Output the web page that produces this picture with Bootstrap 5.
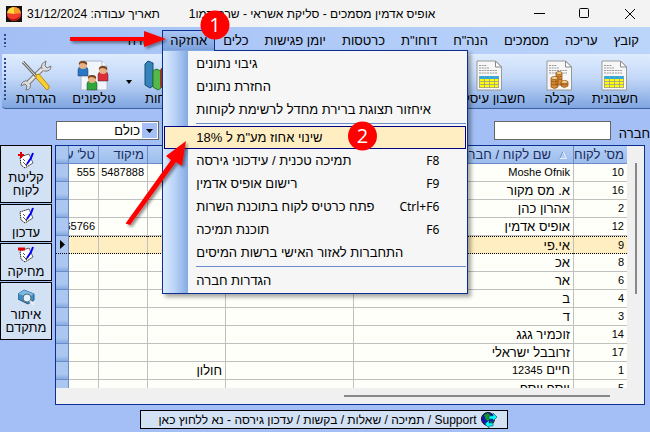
<!DOCTYPE html>
<html lang="he" dir="rtl">
<head>
<meta charset="utf-8">
<meta name="viewport" content="width=device-width, initial-scale=1">
<title>אופיס אדמין</title>
<link href="https://cdn.jsdelivr.net/npm/bootstrap@5.3.0/dist/css/bootstrap.min.css" rel="stylesheet">
<style>
body{font:13px/16px "Liberation Sans",sans-serif;color:#000;background:#a3bff5}
button{color:inherit;font:inherit}
.app{height:100vh}
.titlebar{height:27px;background:#f3f3f3;padding:0 14px 0 6px}
.titlebar h1{font-size:12px;line-height:16px;gap:29px}
.app-logo{margin-right:5px}
.win-btns{gap:34px}
.win-btns svg,.titlebar svg{display:block}
.menubar{height:27px;background:linear-gradient(to right,#a3bff5,#bbd5fa);padding:3px 3px 3px 4px}
.menu-top{height:21px;padding:0 8px;border:0;background:none;white-space:nowrap}
.menu-top.opened{border:1px solid #0a2f91;border-bottom:0;padding:0 7px;background:linear-gradient(#a9c5f3,#7a9fdc)}
.popup{left:0;top:20px;width:306px;z-index:10;border:1px solid #0a2f91;background:linear-gradient(to right,#dcebfd,#b9d2f7 12px,#84aae4 25px,#f6f6f6 25px);padding:1px;box-shadow:3px 3px 4px rgba(0,0,0,.35)}
.popup::before{content:"";position:absolute;left:0;top:-1px;width:51px;height:1px;background:#84aae4}
.popup-row{height:23px;padding:0 26px 0 31px;border:1px solid transparent;background:none;white-space:nowrap;align-items:center}
.popup-row [lang=en]{font:12px/16px "Noto Sans",sans-serif}
.popup-row.hot{background:#ffeec2;border-color:#000080}
.popup-rule{height:1px;margin:2px 0 2px 32px;background:#6a8ccb}
.tools{height:55px;background:linear-gradient(#dfecfe,#c3d8f8 45%,#7fa5e0);border-bottom:1px solid #3b619c;border-radius:0 0 0 4px;margin-left:2px;padding:4px 12px 0 2px}
.tool{border:0;background:none;padding:0;white-space:nowrap}
.tool svg{display:block;margin:0 auto}
.tool-set{gap:17px}
.tool-wide{min-width:76px}
.tool-last{margin:0 16px 0 10px}
.drop{padding:22px 12px 0 10px}
.grips{width:2px;background:repeating-linear-gradient(#2a4a90 0 2px,transparent 2px 4px)}
.filters{height:36px;padding:12px 0 5px 0}
.box{height:19px;border:1px solid #666;border-radius:0;background-color:#fff;font-size:13px;line-height:16px}
.name-box{width:117px}
.name-label{margin-left:8px;padding-top:5px}
.type-box{width:103px;margin-left:56px;padding:0 18px 0 2px;appearance:none;background:#fff url("data:image/svg+xml,%3Csvg xmlns='http://www.w3.org/2000/svg' width='16' height='17'%3E%3Cpath fill='%23a3bff5' d='M0 1h15v15H0z'/%3E%3Cpath d='M4 7h7L7.500 11z'/%3E%3C/svg%3E") right 0 top 0 no-repeat}
.side{width:52px;gap:1px}
.side-btn{border:1px solid #000;background:#d3e1f5;padding:2px 0;line-height:13px}
.side-btn.tall{padding:6px 0 5px}
.side-btn svg{display:block;margin:0 auto 2px}
.grid-frame{border:1px solid #0a2f91;background:#f0f0f0;margin:0 5px 0 3px}
.grid-clip{min-height:0;overflow:hidden}
.data{table-layout:fixed;width:100%;line-height:16px;border-collapse:separate;border-spacing:0}
.data th,.data td{height:18px;padding:0 3px;overflow:hidden;white-space:nowrap;text-align:right;border-left:1px solid #c0c0c0;border-bottom:1px solid #c0c0c0;background:#fffff9}
.data th{font-weight:400;background:linear-gradient(#b5cff5,#9dbdec);border-color:#6a8ccb;color:#1a2c60}
.data .num,.data td:first-child{font-size:11px;line-height:17px}
.data .ind{background:linear-gradient(#abc7f0 70%,#86aae0);border-left:0;border-bottom-color:#6a8ccb;border-right:1px solid #6a8ccb;padding:0}
.data .cut{border-left:0}
.data .picked td{background:#ffeec2;border-top:1px dotted #000;border-bottom:1px dotted #000;line-height:15px}
.data .picked .ind{background:#abc7f0;border-top:0}
.w-id{width:54px}.w-a{width:128px}.w-b{width:78px}.w-zip{width:49px}.w-tel{width:29px}.w-ind{width:13px}
.sort{margin:0 3px 0 8px}
.vbar{width:17px;padding-top:17px}
.vbar i{display:block;width:2px;height:58%;margin:0 auto;background:#888}
.hbar{height:16px;padding:7px 34px 0 0}
.hbar i{display:block;height:2px;width:48%;background:#888}
.support{height:27px;padding:5px 0 3px}
.support button{height:19px;width:368px;margin-right:3px;border:1px solid #000;background:#d3e1f5;font-size:12px;line-height:16px;padding:0 9px 0 8px;white-space:nowrap;gap:4px}
.notes{left:0;top:0;z-index:20;pointer-events:none}
</style>
<script src="https://cdn.jsdelivr.net/npm/bootstrap@5.3.0/dist/js/bootstrap.bundle.min.js"></script>
</head>
<body>
<svg width="0" height="0" class="position-absolute" aria-hidden="true">
<defs>
<symbol id="page" viewBox="0 0 27 31"><path d="M1 1h18.500l6 6v23H1z" fill="#f7f7f7" stroke="#999"/><path d="M19.500 1v6h6z" fill="#fff" stroke="#888"/><path d="M3 5.500h8M3 8h10M3 10.500h18M3 13h18" stroke="#999" stroke-dasharray="2 .7"/></symbol>
<symbol id="sheet" viewBox="0 0 27 31"><use href="#page" width="27" height="31"/><path d="M3 16h20v12H3z" fill="#ff0"/><path d="M3 16h20v3H3z" fill="#29abe2"/><path d="M3 21.500h20M3 24.500h20M3 27.500h20M3.500 16v12M8.500 16v12M13.500 16v12M18.500 16v12M22.500 16v12" stroke="#999" stroke-width=".8" fill="none"/></symbol>
<symbol id="note" viewBox="0 0 17 17"><path d="M2 5l9-3 4 9-8 5-4-3z" fill="#fff" stroke="#222" stroke-dasharray="1.500 .7"/><path d="M5 7l2 2M5 10l3 3" stroke="#555"/><path d="M15 1l-2 5-4 6" stroke="#00f" stroke-width="2" fill="none"/><path d="M9 12l-1 2" stroke="#000"/></symbol>
<symbol id="man" viewBox="0 0 12 17"><path d="M1 16V10q0-3 3-3h4q3 0 3 3v6z" fill="currentColor" stroke="#334" stroke-width=".5"/><circle cx="6" cy="5" r="4" fill="#e7b184"/><path d="M2 5Q1 1 6 1t4 4Q8 3 5 3 3 3 2 5" fill="#7a4420"/></symbol>
</defs>
</svg>
<div class="app d-flex flex-column position-relative overflow-hidden">
<header class="titlebar d-flex align-items-center flex-shrink-0">
<div class="win-btns d-flex align-items-center">
<button class="btn p-0 border-0" aria-label="סגור"><svg width="12" height="12"><path d="M1 1l10 10M11 1L1 11" stroke="#000" fill="none"/></svg></button>
<button class="btn p-0 border-0" aria-label="הגדל"><svg width="11" height="11"><rect x=".5" y=".5" width="9" height="9" rx="1" stroke="#000" fill="none"/></svg></button>
<button class="btn p-0 border-0" aria-label="מזער"><svg width="11" height="11"><path d="M0 5.500h11" stroke="#000"/></svg></button>
</div>
<h1 class="m-0 flex-grow-1 d-flex justify-content-end fw-normal text-nowrap"><span>אופיס אדמין מסמכים - סליקת אשראי - שרת דמו1</span><span>תאריך עבודה: 31/12/2024</span></h1>
<svg class="app-logo" width="16" height="16"><rect width="16" height="16" fill="#111"/><circle cx="8" cy="8" r="7" fill="#f33d2c"/><path d="M8 8L1 7Q2 1 8 1z" fill="#ffd83c"/><path d="M8 8V1q6 0 7 6z" fill="#f99a28"/><path d="M2 11q6 5 12-1-2 5-6 5t-6-4" fill="#b41313"/></svg>
</header>

<nav class="menubar d-flex flex-shrink-0">
<button class="menu-top">קובץ</button><button class="menu-top">עריכה</button><button class="menu-top">מסמכים</button><button class="menu-top">הנה"ח</button><button class="menu-top">דוחו"ת</button><button class="menu-top">כרטסות</button><button class="menu-top">יומן פגישות</button><button class="menu-top">כלים</button>
<div class="position-relative">
<button class="menu-top opened" aria-expanded="true">אחזקה</button>
<div class="popup position-absolute" dir="ltr">
<button class="popup-row d-flex justify-content-between w-100"><span dir="rtl">גיבוי נתונים</span></button>
<button class="popup-row d-flex justify-content-between w-100"><span dir="rtl">החזרת נתונים</span></button>
<button class="popup-row d-flex justify-content-between w-100"><span dir="rtl">איחזור תצוגת ברירת מחדל לרשימת לקוחות</span></button>
<div class="popup-rule"></div>
<button class="popup-row hot d-flex justify-content-between w-100"><span dir="rtl">שינוי אחוז מע"מ ל 18%</span></button>
<button class="popup-row d-flex justify-content-between w-100"><span dir="rtl">תמיכה טכנית / עידכוני גירסה</span><span lang="en">F8</span></button>
<button class="popup-row d-flex justify-content-between w-100"><span dir="rtl">רישום אופיס אדמין</span><span lang="en">F9</span></button>
<button class="popup-row d-flex justify-content-between w-100"><span dir="rtl">פתח כרטיס לקוח בתוכנת השרות</span><span lang="en">Ctrl+F6</span></button>
<button class="popup-row d-flex justify-content-between w-100"><span dir="rtl">תוכנת תמיכה</span><span lang="en">F6</span></button>
<button class="popup-row d-flex justify-content-between w-100"><span dir="rtl">התחברות לאזור האישי ברשות המיסים</span></button>
<div class="popup-rule"></div>
<button class="popup-row d-flex justify-content-between w-100"><span dir="rtl">הגדרות חברה</span></button>
</div>
</div>
<button class="menu-top">עזרה</button>
<span class="flex-grow-1"></span><span class="grips my-1"></span>
</nav>

<div class="tools d-flex justify-content-between flex-shrink-0">
<div class="tool-set d-flex">
<button class="tool"><svg width="27" height="31"><use href="#sheet"/></svg>חשבונית</button>
<button class="tool"><svg width="27" height="31"><use href="#page"/><g fill="#d78b35" stroke="#8c4d12" stroke-width=".7"><path d="M5 18v9q3.500 3 7 0v-9zM10 13v12h6V13zM15 22v4q3 3 7 0v-4z"/><ellipse cx="8.500" cy="18" rx="3.500" ry="1.500" fill="#f5d489"/><ellipse cx="13" cy="13" rx="3" ry="1.500" fill="#f5d489"/><ellipse cx="18.500" cy="22" rx="3.500" ry="1.500" fill="#f5d489"/><path d="M5 21q3.500 2 7 0M5 24q3.500 2 7 0M10 16q3 2 6 0M12 19q2 1 4 0M15 24q3 2 7 0" fill="none"/></g></svg>קבלה</button>
<button class="tool tool-wide"><svg width="27" height="31"><use href="#sheet"/></svg>חשבון עיסקה</button>
</div>
<div class="d-flex">
<button class="tool"><svg width="34" height="31"><path d="M1 4l3-3 5 2v23l-3 2-5-3z" fill="#3483ba" stroke="#174d7a"/><path d="M9 11l3-2 5 2v17l-3 2-5-3z" fill="#54b948" stroke="#28752a"/><path d="M17 9l4-2 5 2v19l-4 2-5-3z" fill="#e33" stroke="#911"/></svg>דוחות</button>
<span class="drop"><svg class="d-block" width="6" height="4"><path d="M0 0h6L3 4z"/></svg></span>
<button class="tool"><svg width="33" height="31"><path d="M4 1h21l5 5v24H4z" fill="#f1f5fc" stroke="#aab8d0"/><path d="M25 1v5h5" fill="#fff" stroke="#aab8d0"/><use href="#man" width="12" height="17" color="#2878c8"/><use href="#man" x="20" y="5" width="12" height="17" color="#dc2f35"/><use href="#man" x="9" y="14" width="12" height="17" color="#2da63a"/></svg>טלפונים</button>
<button class="tool tool-last"><svg width="32" height="31"><path d="M6 25L25 6" stroke="#777" stroke-width="5"/><path d="M6 25L25 6" stroke="#e4e4e4" stroke-width="3"/><path d="M22 9q-2-5 4-8l-1 5 2 2 4-2q0 6-7 5M8 21q-6-1-7 5l4-2 2 2-1 4q6-1 4-7" fill="#ddd" stroke="#777"/><path d="M3 2l13 14" stroke="#666" stroke-width="3"/><path d="M3 2l13 14" stroke="#eee"/><path d="M16 15l3-1 10 12q1 3-2 4L16 18z" fill="#f9cf32" stroke="#b88a12"/></svg>הגדרות</button>
<span class="grips mb-2"></span>
</div>
</div>

<div class="filters d-flex flex-shrink-0">
<label for="co" class="name-label">חברה</label>
<input id="co" class="box name-box" type="text">
<span class="flex-grow-1"></span>
<select class="box type-box" aria-label="סינון"><option>כולם</option></select>
</div>

<main class="d-flex flex-row-reverse flex-grow-1" style="min-height:0">
<aside class="side d-flex flex-column flex-shrink-0">
<button class="side-btn tall"><svg width="17" height="17"><use href="#note"/><path d="M3 0v6M0 3h6" stroke="#e00000" stroke-width="2"/></svg>קליטת<br>לקוח</button>
<button class="side-btn"><svg width="17" height="17"><use href="#note"/></svg>עדכון</button>
<button class="side-btn"><svg width="17" height="17"><use href="#note"/><path d="M0 3h7" stroke="#e00000" stroke-width="3"/></svg>מחיקה</button>
<button class="side-btn tall"><svg width="17" height="17"><path d="M0 5l6-4 10 4v6l-6 4L0 10z" fill="#3c8fc7" stroke="#205b8c"/><path d="M0 5l6-4 10 4-5 3z" fill="#79b9e4"/><circle cx="9" cy="9" r="4" fill="#dff3ff" stroke="#666"/><path d="M12 12l4 4" stroke="#eee" stroke-width="2"/></svg>איתור<br>מתקדם</button>
</aside>
<section class="grid-frame d-flex flex-column flex-grow-1 overflow-hidden">
<div class="d-flex flex-grow-1" style="min-height:0">
<div class="vbar flex-shrink-0"><i></i></div>
<div class="grid-clip flex-grow-1">
<table class="data">
<thead><tr><th class="w-id">מס' לקוח</th><th><svg class="sort" width="8" height="8"><path d="M.5 7.500h7L4 .5z" fill="#b5cff5" stroke="#e4eefc"/><path d="M.5 7.500L4 .5" stroke="#6a8ccb"/></svg>שם לקוח / חברה</th><th class="w-a"></th><th class="w-b"></th><th class="w-zip">מיקוד</th><th class="w-tel cut">טל' עבודה</th><th class="w-ind ind"></th></tr></thead>
<tbody>
<tr><td>10</td><td class="num">Moshe Ofnik</td><td></td><td></td><td class="num">5487888</td><td class="cut num">555</td><td class="ind"></td></tr>
<tr><td>16</td><td>א. מס מקור</td><td></td><td></td><td></td><td class="cut"></td><td class="ind"></td></tr>
<tr><td>2</td><td>אהרון כהן</td><td></td><td></td><td></td><td class="cut"></td><td class="ind"></td></tr>
<tr><td>12</td><td>אופיס אדמין</td><td></td><td></td><td></td><td class="cut num">65766</td><td class="ind"></td></tr>
<tr class="picked"><td>9</td><td>אי.פי</td><td></td><td></td><td></td><td class="cut"></td><td class="ind"><svg class="d-block mx-auto" width="5" height="9"><path d="M0 0l5 4.500L0 9z"/></svg></td></tr>
<tr><td>8</td><td>אכ</td><td></td><td></td><td></td><td class="cut"></td><td class="ind"></td></tr>
<tr><td>6</td><td>אר</td><td></td><td></td><td></td><td class="cut"></td><td class="ind"></td></tr>
<tr><td>4</td><td>ב</td><td></td><td></td><td></td><td class="cut"></td><td class="ind"></td></tr>
<tr><td>3</td><td>ד</td><td></td><td></td><td></td><td class="cut"></td><td class="ind"></td></tr>
<tr><td>14</td><td>זוכמיר גגג</td><td></td><td></td><td></td><td class="cut"></td><td class="ind"></td></tr>
<tr><td>17</td><td>זרובבל ישראלי</td><td></td><td></td><td></td><td class="cut"></td><td class="ind"></td></tr>
<tr><td>1</td><td>חיים <span class="num">12345</span></td><td></td><td>חולון</td><td></td><td class="cut"></td><td class="ind"></td></tr>
<tr><td>5</td><td>יוסף יוסף</td><td></td><td></td><td></td><td class="cut"></td><td class="ind"></td></tr>
</tbody>
</table>
</div>
</div>
<div class="hbar flex-shrink-0"><i></i></div>
</section>
</main>

<footer class="support d-flex justify-content-center flex-shrink-0">
<button class="d-flex align-items-center"><svg class="flex-shrink-0" width="17" height="16"><circle cx="7" cy="7" r="6.500" fill="#1414b8" stroke="#111"/><path d="M3 3l4-2 3 3-2 5-3-1zM9 9l3 1-2 3z" fill="#119a23"/><path d="M8 4h4V1l4 4-4 4V7H8zM12 11H8V8l-4 4 4 4v-2h4z" fill="#0ff" stroke="#045" stroke-width=".6"/></svg><span>Support / תמיכה / שאלות / בקשות / עדכון גירסה - נא ללחוץ כאן</span></button>
</footer>

<svg class="notes position-absolute" width="400" height="240" direction="ltr" font-family="Open Sans, sans-serif" font-size="20" fill="#fff" text-anchor="middle">
<defs><filter id="sh" x="-20%" y="-20%" width="150%" height="150%"><feDropShadow dx="2" dy="2" stdDeviation="1.500" flood-opacity=".45"/></filter></defs>
<g fill="red"><path d="M70 37h74v-6l22 8-22 8v-6H70z" filter="url(#sh)"/><path d="M125.500 223.500L171 160l-5-4 20-15-4 25-6-4-46 63z" filter="url(#sh)"/><circle cx="215" cy="25" r="14.500"/><circle cx="362.500" cy="136" r="14.500"/></g>
<text x="215" y="32">1</text><text x="362.500" y="143">2</text>
</svg>
</div>
</body>
</html>
